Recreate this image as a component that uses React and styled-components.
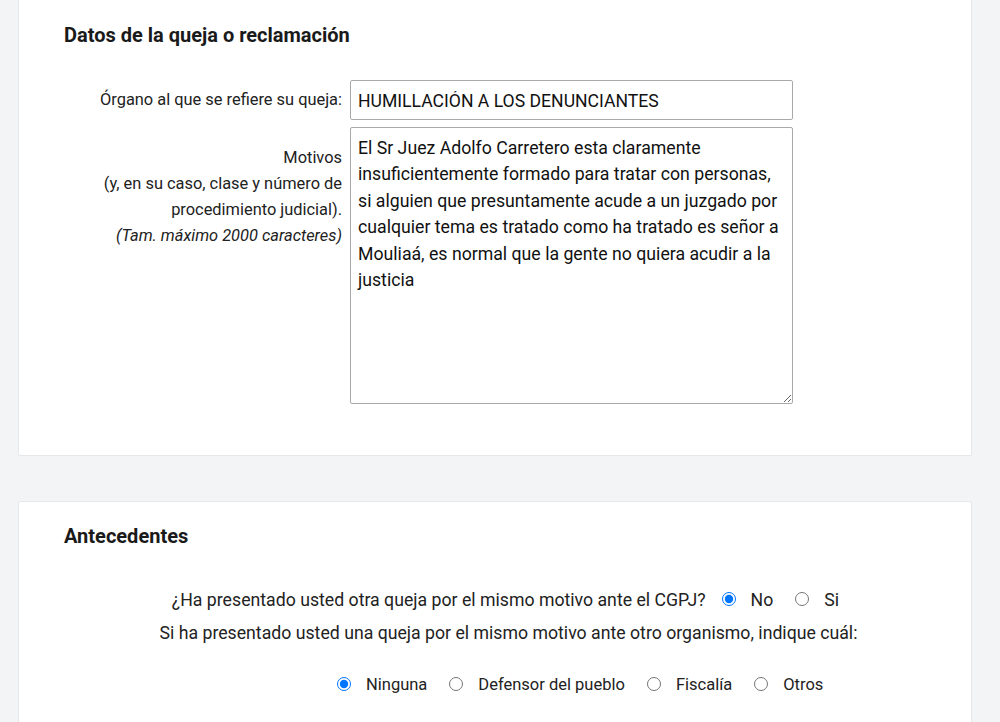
import React from 'react';
import styled, { createGlobalStyle } from 'styled-components';

const GlobalStyle = createGlobalStyle`
  html, body {
    margin: 0;
    padding: 0;
    background: #f3f4f6;
  }
  body {
    font-family: Roboto, "Liberation Sans", Arial, sans-serif;
    color: #222;
  }
`;

function App() {
  return (
    <Page>
      <GlobalStyle />
      <Card first>
        <Title>Datos de la queja o reclamación</Title>
        <FormRow align="center">
          <Label>Órgano al que se refiere su queja:</Label>
          <TextInput type="text" defaultValue="HUMILLACIÓN A LOS DENUNCIANTES" />
        </FormRow>
        <FormRow>
          <Label top>
            Motivos
            <br />
            (y, en su caso, clase y número de
            <br />
            procedimiento judicial).
            <br />
            <em>(Tam. máximo 2000 caracteres)</em>
          </Label>
          <TextArea
            defaultValue={
              'El Sr Juez Adolfo Carretero esta claramente insuficientemente formado para tratar con personas, si alguien que presuntamente acude a un juzgado por cualquier tema es tratado como ha tratado es señor a Mouliaá, es normal que la gente no quiera acudir a la justicia'
            }
          />
        </FormRow>
      </Card>

      <Card>
        <Title spacing={41}>Antecedentes</Title>
        <Question>
          <span>¿Ha presentado usted otra queja por el mismo motivo ante el CGPJ?</span>
          <Choice>
            <Radio type="radio" name="cgpj" defaultChecked />
            No
          </Choice>
          <Choice>
            <Radio type="radio" name="cgpj" />
            Si
          </Choice>
        </Question>
        <Question>
          <span>Si ha presentado usted una queja por el mismo motivo ante otro organismo, indique cuál:</span>
        </Question>
        <Options>
          <Choice>
            <Radio type="radio" name="org" defaultChecked />
            Ninguna
          </Choice>
          <Choice>
            <Radio type="radio" name="org" />
            Defensor del pueblo
          </Choice>
          <Choice>
            <Radio type="radio" name="org" />
            Fiscalía
          </Choice>
          <Choice>
            <Radio type="radio" name="org" />
            Otros
          </Choice>
        </Options>
      </Card>
    </Page>
  );
}

export default App;

const Page = styled.div`
  width: 954px;
  padding-left: 18px;
  display: flex;
  flex-direction: column;
  gap: 45px;
`;

const Card = styled.div`
  background: #fff;
  border: 1px solid #e6e7e9;
  border-radius: 2px;
  padding: ${(p) => (p.first ? '24px' : '22px')} 45px 44px 45px;
  margin-top: ${(p) => (p.first ? '-1px' : '0')};
  ${(p) => p.first && 'border-top: none;'}
`;

const Title = styled.h3`
  margin: 0 0 ${(p) => p.spacing || 33}px 0;
  font-family: Roboto, sans-serif;
  font-size: 20px;
  font-weight: 700;
  line-height: 24px;
  color: #1a1a1a;
`;

const FormRow = styled.div`
  display: grid;
  grid-template-columns: 278px 443px;
  column-gap: 8px;
  align-items: ${(p) => (p.align === 'center' ? 'center' : 'start')};
  margin-bottom: 7px;
`;

const Label = styled.div`
  text-align: right;
  font-family: Roboto, sans-serif;
  font-size: 16.4px;
  line-height: 26px;
  color: #222;
  padding-top: ${(p) => (p.top ? '18px' : '0')};

  em {
    font-style: italic;
  }
`;

const TextInput = styled.input`
  box-sizing: border-box;
  width: 443px;
  height: 40px;
  border: 1px solid #a9a9a9;
  border-radius: 2px;
  padding: 1px 7px 0;
  font-family: Roboto, sans-serif;
  font-size: 17.6px;
  color: #111;
  outline: none;
`;

const TextArea = styled.textarea`
  box-sizing: border-box;
  width: 443px;
  height: 277px;
  border: 1px solid #a9a9a9;
  border-radius: 2px;
  padding: 7px 7px;
  font-family: Roboto, sans-serif;
  font-size: 17.7px;
  line-height: 26.4px;
  color: #111;
  outline: none;
  resize: both;
`;

const Question = styled.div`
  display: flex;
  justify-content: center;
  align-items: center;
  padding-left: 40px;
  font-family: Roboto, sans-serif;
  font-size: 17.7px;
  line-height: 22px;
  color: #222;
  margin-bottom: 11px;

  > span {
    margin-right: 13px;
  }
`;

const Options = styled.div`
  display: flex;
  align-items: center;
  padding-left: 270px;
  margin-top: 30px;
  font-family: Roboto, sans-serif;
  font-size: 16.5px;
  line-height: 22px;
  color: #222;
`;

const Choice = styled.label`
  display: inline-flex;
  align-items: center;
  margin-right: 19px;
  white-space: nowrap;
`;

const Radio = styled.input`
  width: 14px;
  height: 14px;
  margin: 0 15px 3px 3px;
  accent-color: #0075ff;
`;
